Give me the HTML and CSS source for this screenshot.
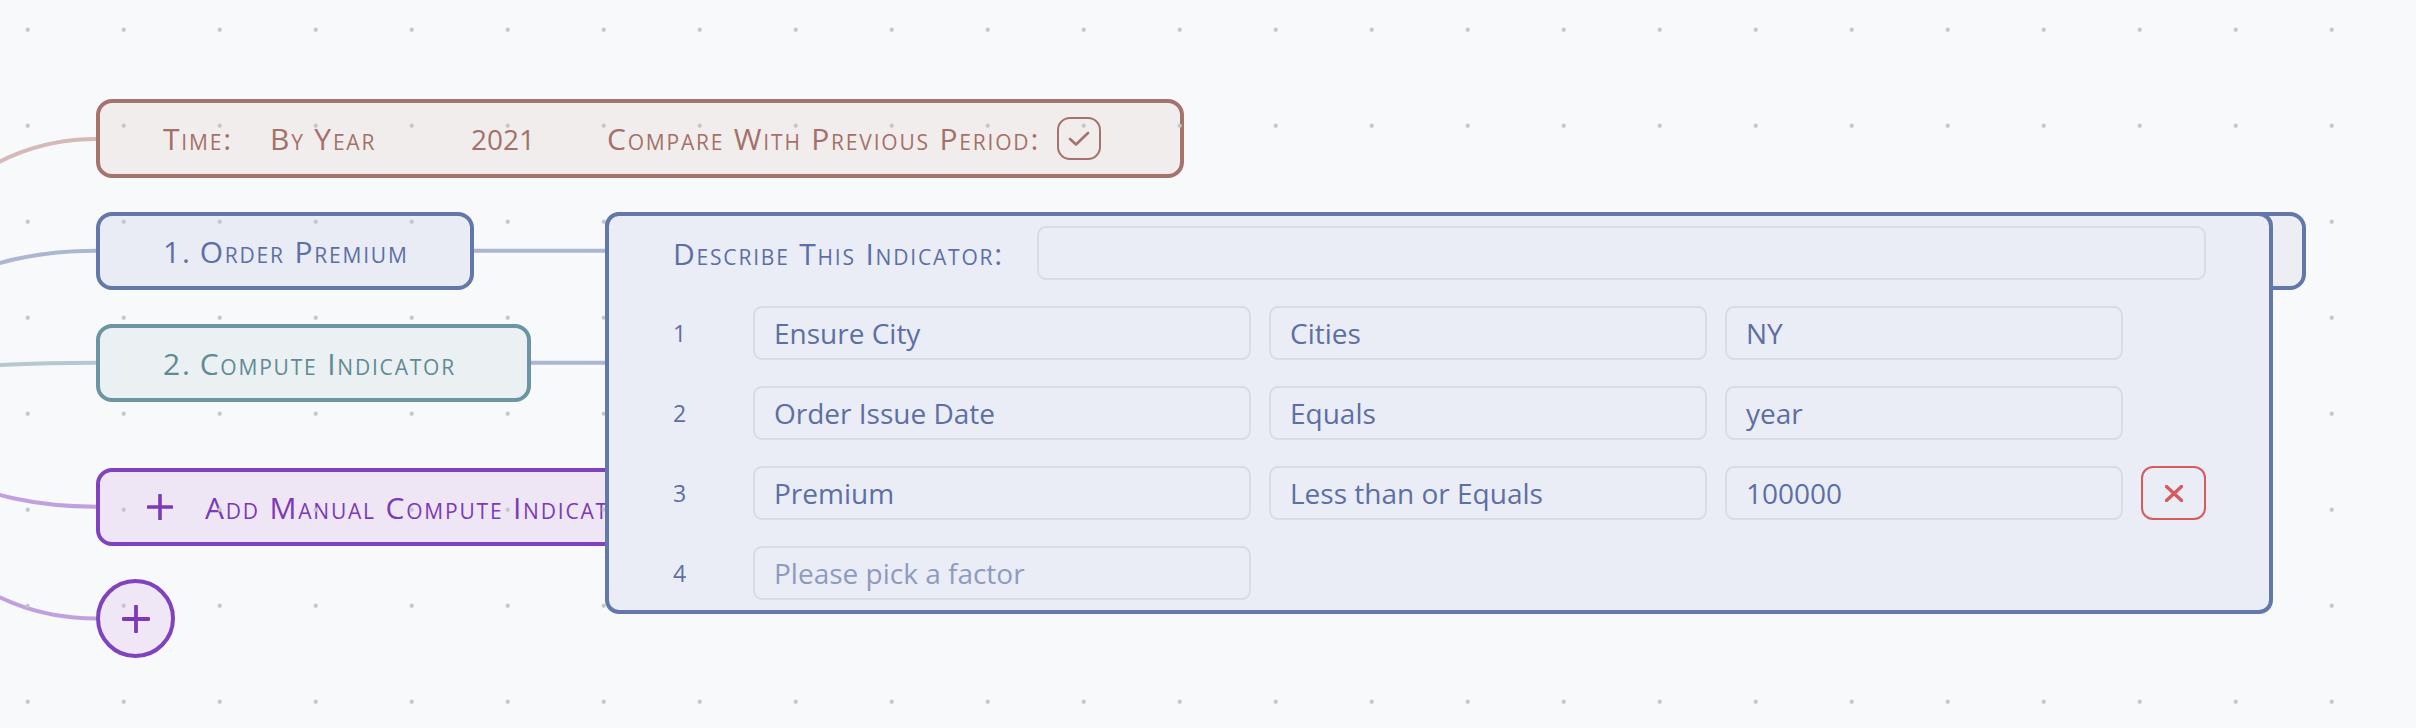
FILE: index.html
```html
<!DOCTYPE html>
<html lang="en">
<head>
<meta charset="utf-8">
<title>Indicator editor</title>
<link rel="stylesheet" href="styles.css">
</head>
<body>
<div class="canvas">
  <svg class="links" width="2416" height="728" viewBox="0 0 2416 728">
    <path class="link link-time" d="M -50 191.5 C -10 165.2 30 139 96 139"/>
    <path class="link link-order" d="M -50 279.2 C -10 265 30 250.7 96 250.7"/>
    <path class="link link-compute" d="M -50 368 C -10 365.3 30 362.7 96 362.7"/>
    <path class="link link-add" d="M -50 479.7 C -10 493.2 30 506.7 96 506.7"/>
    <path class="link link-add" d="M -50 569.2 C -10 593.9 30 618.5 96 618.5"/>
    <path class="link link-order" d="M 470 250.7 L 620 250.7"/>
    <path class="link link-order" d="M 528 362.7 L 620 362.7"/>
  </svg>

  <div class="nodes">
    <div class="node node-time">
      <span class="sc t-label">Time:</span>
      <span class="sc t-period">By Year</span>
      <span class="t-year">2021</span>
      <span class="sc t-compare">Compare With Previous Period:</span>
      <span class="checkbox">
        <svg width="22" height="16" viewBox="0 0 22 16"><path d="M2 8 L8 13.5 L20 2" fill="none" stroke="currentColor" stroke-width="2.6" stroke-linecap="round" stroke-linejoin="round"/></svg>
      </span>
    </div>
    <div class="node node-order"><span class="sc"><span class="idx">1.</span>Order Premium</span></div>
    <div class="node node-compute"><span class="sc"><span class="idx">2.</span>Compute Indicator</span></div>
    <div class="node node-add">
      <svg class="plus-sm" width="26" height="26" viewBox="0 0 26 26"><path d="M13 1 V25 M1 13 H25" stroke="currentColor" stroke-width="3.6" stroke-linecap="round"/></svg>
      <span class="sc">Add Manual Compute Indicator</span>
    </div>
    <div class="node-plus">
      <svg width="28" height="28" viewBox="0 0 28 28"><path d="M14 1.5 V26.5 M1.5 14 H26.5" stroke="currentColor" stroke-width="3.8" stroke-linecap="round"/></svg>
    </div>
  </div>

  <div class="target-node"></div>
  <div class="dots"></div>

  <div class="panel">
    <div class="describe">
      <span class="sc describe-label">Describe This Indicator:</span>
      <div class="field field-wide"></div>
    </div>
    <div class="rows">
      <div class="row">
        <span class="num">1</span>
        <div class="field">Ensure City</div>
        <div class="field">Cities</div>
        <div class="field">NY</div>
      </div>
      <div class="row">
        <span class="num">2</span>
        <div class="field">Order Issue Date</div>
        <div class="field">Equals</div>
        <div class="field">year</div>
      </div>
      <div class="row">
        <span class="num">3</span>
        <div class="field">Premium</div>
        <div class="field">Less than or Equals</div>
        <div class="field">100000</div>
        <div class="delete">
          <svg width="18" height="17" viewBox="0 0 18 17"><path d="M1.5 1.5 L16.5 15.5 M16.5 1.5 L1.5 15.5" stroke="currentColor" stroke-width="3.4" stroke-linecap="round"/></svg>
        </div>
      </div>
      <div class="row">
        <span class="num">4</span>
        <div class="field placeholder">Please pick a factor</div>
      </div>
    </div>
  </div>
</div>
</body>
</html>
```

FILE: styles.css
```css
* { box-sizing: border-box; }

html, body {
  margin: 0;
  padding: 0;
}

body {
  width: 2416px;
  height: 728px;
  overflow: hidden;
  background: #f8f9fb;
  font-family: "Open Sans", Lato, "Liberation Sans", sans-serif;
}

.canvas {
  position: relative;
  width: 2416px;
  height: 728px;
}

.links {
  position: absolute;
  left: 0;
  top: 0;
}

.link {
  fill: none;
  stroke-width: 4;
}
.link-time { stroke: #d6bab7; }
.link-order { stroke: #abb6d1; }
.link-compute { stroke: #b5c9d0; }
.link-add { stroke: #c0a0de; }

.sc {
  font-variant: small-caps;
  font-size: 30px;
  letter-spacing: 1.8px;
}

.idx {
  margin-right: 8px;
}

/* left column of diagram nodes */
.nodes {
  position: absolute;
  left: 96px;
  top: 99px;
  display: flex;
  flex-direction: column;
  align-items: flex-start;
  gap: 34px;
}

.node {
  height: 78px;
  border: 4px solid;
  border-radius: 16px;
  display: flex;
  align-items: center;
  padding: 0 0 0 63px;
  font-size: 28px;
  white-space: nowrap;
}

.node-time {
  width: 1088px;
  height: 79px;
  border-color: #a6736c;
  background: #f2eded;
  color: #a4716a;
}
.t-label { width: 107px; }
.t-period { width: 201px; }
.t-year { width: 136px; font-size: 28px; }
.t-compare { width: 450px; }

.checkbox {
  width: 44px;
  height: 43px;
  border: 2px solid #a6736c;
  border-radius: 13px;
  display: flex;
  align-items: center;
  justify-content: center;
  color: #a6736c;
}

.node-order {
  width: 378px;
  border-color: #6477a9;
  background: #e9ecf4;
  color: #5c6fa6;
}

.node-compute {
  width: 435px;
  border-color: #6b95a1;
  background: #ebf0f2;
  color: #5f8b97;
}

.node-add {
  width: 660px;
  margin-top: 32px;
  border-color: #8042be;
  background: #efe6f5;
  color: #7c3ab8;
  padding-left: 47px;
}
.plus-sm { margin-right: 32px; color: #7c3ab8; }

.node-plus {
  width: 79px;
  height: 79px;
  margin-top: -1px;
  border: 4px solid #8042be;
  border-radius: 50%;
  background: #efe7f6;
  color: #7c3ab8;
  display: flex;
  align-items: center;
  justify-content: center;
}

/* hidden node partly covered by the panel */
.target-node {
  position: absolute;
  left: 605px;
  top: 212px;
  width: 1701px;
  height: 78px;
  border: 4px solid #6477a9;
  border-radius: 16px;
  background: #eceef4;
}

.dots {
  position: absolute;
  inset: 0;
  pointer-events: none;
  background-image: radial-gradient(circle at 48px 48px, #c3c4c8 0, #c3c4c8 1.6px, transparent 2.4px);
  background-size: 96px 96px;
  background-position: -20.3px -18.3px;
}

/* floating editor panel */
.panel {
  position: absolute;
  left: 605px;
  top: 212px;
  width: 1668px;
  height: 402px;
  border: 4px solid #6477a9;
  border-radius: 14px;
  background: #eaedf5;
  padding: 10px 63px 10px 64px;
  color: #5d6fa4;
}

.describe {
  display: flex;
  align-items: center;
  height: 54px;
  margin-bottom: 26px;
}
.describe-label {
  width: 364px;
  color: #5c6fa6;
}
.field-wide { flex: 1; }

.rows {
  display: flex;
  flex-direction: column;
  gap: 26px;
}

.row {
  display: grid;
  grid-template-columns: 62px 498px 438px 398px 65px;
  column-gap: 18px;
  align-items: center;
  height: 54px;
}

.num {
  font-size: 23px;
  color: #5d6fa4;
}

.field {
  height: 54px;
  border: 2px solid #d6dde7;
  border-radius: 9px;
  background: #eaedf5;
  display: flex;
  align-items: center;
  padding-left: 19px;
  font-size: 28px;
  color: #5d6fa4;
  white-space: nowrap;
}
.placeholder { color: #8e9bbf; }

.delete {
  height: 54px;
  border: 2px solid #d55b5d;
  border-radius: 12px;
  display: flex;
  align-items: center;
  justify-content: center;
  color: #d55b5d;
}
```
